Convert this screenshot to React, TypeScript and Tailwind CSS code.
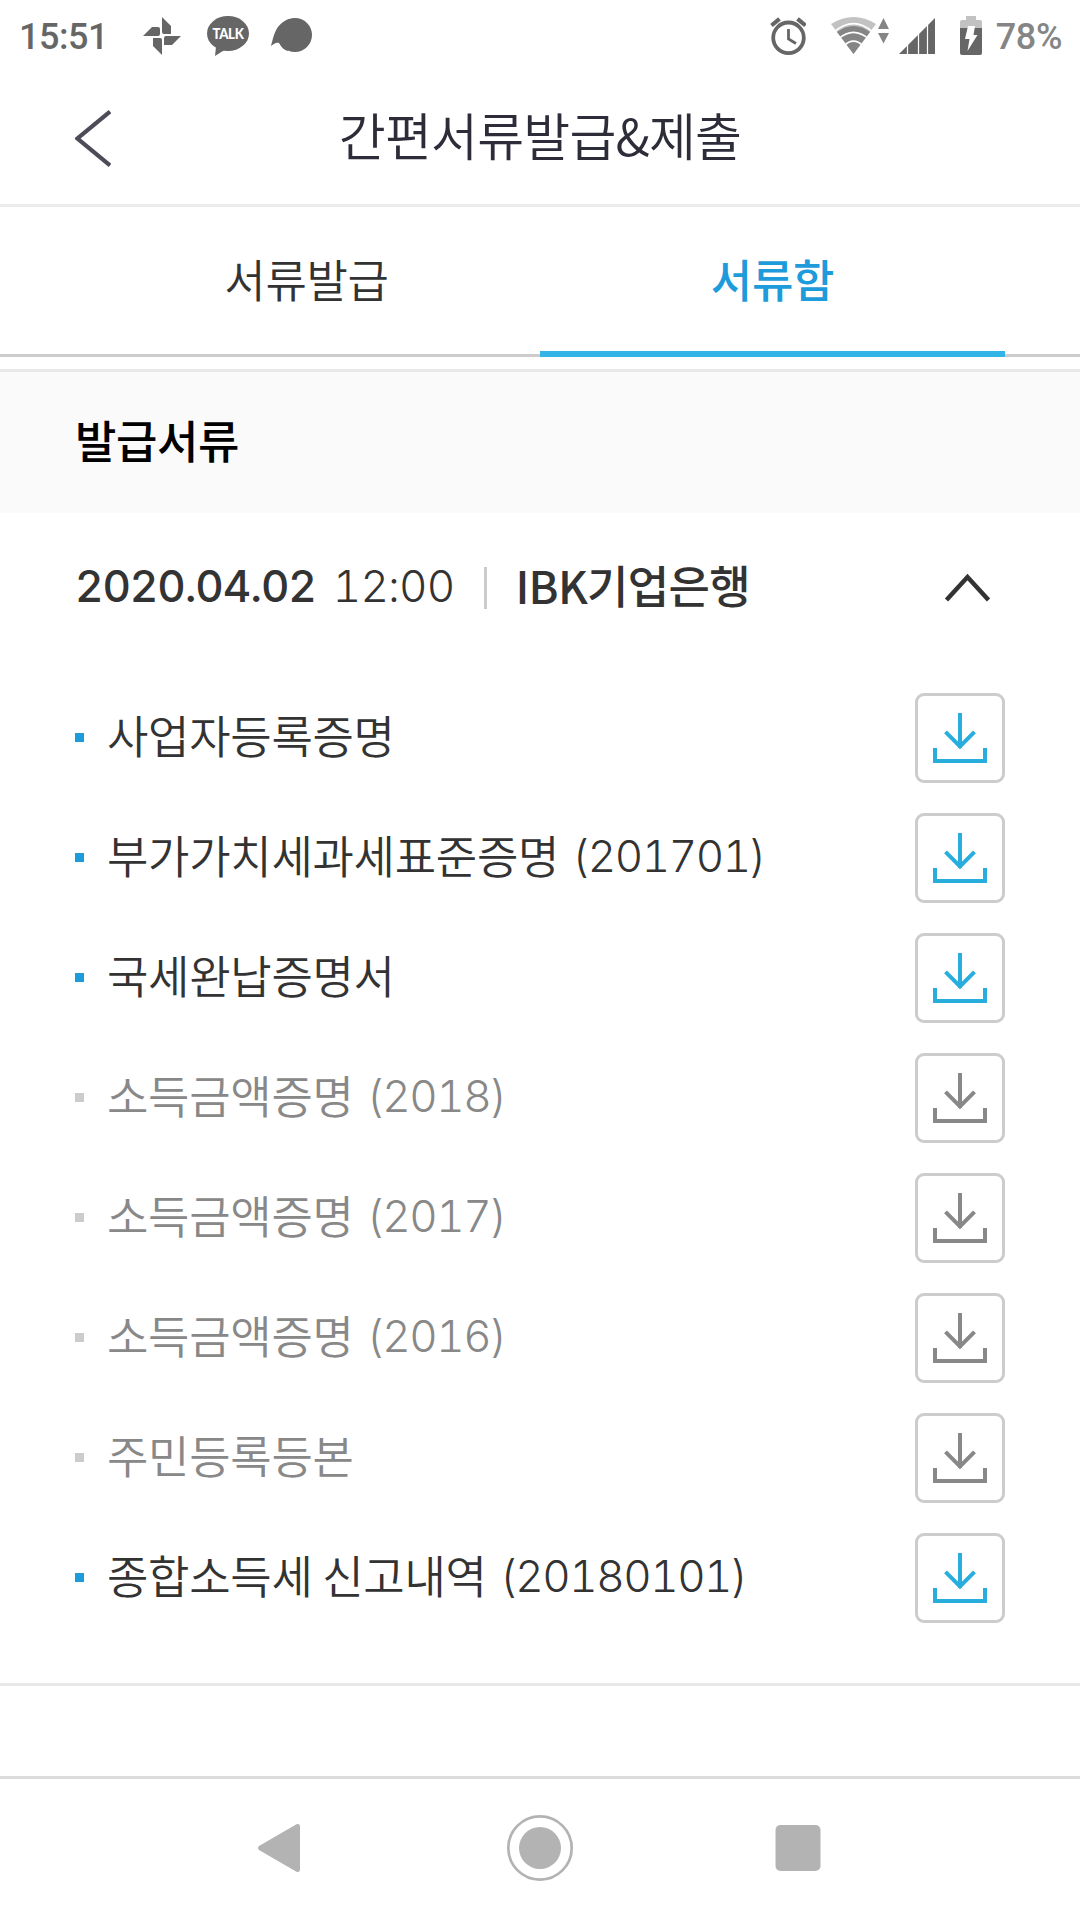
type Doc = { name: string; suffix?: string; ready: boolean };

const docs: Doc[] = [
  { name: "사업자등록증명", ready: true },
  { name: "부가가치세과세표준증명", suffix: "(201701)", ready: true },
  { name: "국세완납증명서", ready: true },
  { name: "소득금액증명", suffix: "(2018)", ready: false },
  { name: "소득금액증명", suffix: "(2017)", ready: false },
  { name: "소득금액증명", suffix: "(2016)", ready: false },
  { name: "주민등록등본", ready: false },
  { name: "종합소득세 신고내역", suffix: "(20180101)", ready: true },
];

const StatusBar = () => (
  <div className="flex h-18 shrink-0 items-start justify-between pr-[18px] pl-[19px] font-[Roboto,sans-serif] text-[36px] leading-[42px] text-[#666]">
    <div className="flex">
      <span className="mt-4 w-[124px] font-medium tracking-[-0.5px]">15:51</span>
      <svg className="mt-4 h-10 w-10" viewBox="143 16 40 40" fill="#666">
        <path d="M162 17L171 26V34H164Q162 34 162 32Z" />
        <path d="M143 36L152 27H158Q160 27 160 29V34Q160 36 158 36Z" />
        <path d="M153 38H160Q162 38 162 40V55L153 46Z" />
        <path d="M164 45V38Q164 36 166 36H181L172 45Z" />
      </svg>
      <div className="relative mt-4 ml-6 h-10 w-[42px]">
        <svg className="h-10 w-[42px]" viewBox="207 16 42 40" fill="#666">
          <ellipse cx="228" cy="33.5" rx="21" ry="17.5" />
          <path d="M216 47L215 56L226 49Z" />
        </svg>
        <span className="absolute inset-x-0 top-[7px] scale-x-88 text-center font-[Lato,sans-serif] text-[15px] leading-5 font-black tracking-[-0.4px] text-white">
          TALK
        </span>
      </div>
      <svg className="mt-4 ml-[22px] h-10 w-[42px]" viewBox="271 16 42 40" fill="#666">
        <circle cx="295" cy="35" r="17" />
        <path d="M271 46C274 36 275 24 289 19L288 51C284 50 281 47 279 43C276 42 274 44 271 46Z" />
      </svg>
    </div>
    <div className="flex">
      <svg className="mt-4 h-10 w-[36px]" viewBox="770 16 36 40" fill="none" stroke="#666">
        <circle cx="788.5" cy="37.8" r="15.3" strokeWidth="3.8" />
        <path d="M788.5 29V39L796 43.5" strokeWidth="2.8" />
        <path d="M771.5 25.5L779.5 18.8M805.5 25.5L797.5 18.8" strokeWidth="4.2" />
      </svg>
      <svg className="mt-4 ml-[24px] h-10 w-[60px]" viewBox="830 16 60 40">
        <path d="M853.5 54L831 24Q853.5 10 876 24Z" fill="#c2c2c2" />
        <path d="M853.5 54L837 32Q853.5 20 870 32Z" fill="#858585" />
        <path
          d="M834 34Q853.5 17 873 34M838 41Q853.5 27.5 869 41M844 47.5Q853.5 38.5 863 47.5"
          transform="translate(0 -1.8)"
          fill="none"
          stroke="#fff"
          strokeWidth="1.6"
        />
        <path d="M883.5 18L889 29H878ZM883.5 43.5L889 33H878Z" fill="#858585" />
      </svg>
      <svg className="mt-4 ml-[8px] h-10 w-[38px]" viewBox="898 16 38 40">
        <path d="M899 54L935 18V54Z" fill="#666" />
        <path d="M907.5 18V54M918.5 18V54M927.5 18V54" stroke="#fff" strokeWidth="1.2" />
      </svg>
      <svg className="mt-4 ml-[24px] h-10 w-[22px]" viewBox="960 16 22 40">
        <path d="M966 16H976V20H980Q982 20 982 22V28H960V22Q960 20 962 20H966Z" fill="#c2c2c2" />
        <path d="M960 28H982V53Q982 55 980 55H962Q960 55 960 53Z" fill="#666" />
        <path d="M968 26H975L973.5 35H977.5L967.5 51L969.5 39H965Z" fill="#fff" />
      </svg>
      <span className="mt-4 ml-[14px] font-medium tracking-[-0.4px] text-[#858585]">78%</span>
    </div>
  </div>
);

const Header = () => (
  <header className="flex h-[135px] shrink-0 items-center border-b-3 border-[#ececec] px-[75px]">
    <svg className="h-[60px] w-9" viewBox="75 108 36 60" fill="none" stroke="#4c4c58" strokeWidth="4.2">
      <path d="M110 111.5L77.5 138.5L110 165.5" />
    </svg>
    <h1 className="mr-9 flex-1 pb-2 text-center text-[51px] leading-[72px] font-[350] tracking-[-0.8px] text-[#2d2d3a]">
      간편서류발급&amp;제출
    </h1>
  </header>
);

const Tabs = () => (
  <nav className="flex h-[150px] shrink-0 border-b-3 border-[#ccc] px-[75px] text-[45px] leading-[64px] tracking-[-0.3px]">
    <button className="w-1/2 pr-[2px] pb-1 font-[350] text-[#333]">서류발급</button>
    <button className="-mb-[3px] w-1/2 border-b-6 border-[#33b4e6] pb-px font-medium text-[#1e9bdb]">
      서류함
    </button>
  </nav>
);

const DownloadButton = ({ ready }: { ready: boolean }) => (
  <button
    className={`flex h-[90px] w-[90px] items-center justify-center rounded-[9px] border-3 border-[#ccc] ${
      ready ? "text-[#28aedd]" : "text-[#888]"
    }`}
  >
    <svg className="h-[84px] w-[84px]" viewBox="3 3 84 84" fill="none" stroke="currentColor" strokeWidth="4">
      <path d="M45 20V55M30.5 38.8L45 53.3L59.5 38.8" />
      <path d="M20 55V68H70V55" />
    </svg>
  </button>
);

const DocRow = ({ doc }: { doc: Doc }) => (
  <li className="flex h-[120px] items-center">
    <span className={`mb-px h-[9px] w-[9px] ${doc.ready ? "bg-[#1e9bdb]" : "bg-[#ccc]"}`} />
    <span
      className={`ml-[23px] flex-1 pb-[6px] text-[45px] leading-[64px] font-[350] tracking-[-0.3px] ${
        doc.ready ? "text-[#333]" : "text-[#888]"
      }`}
    >
      {doc.name}
      {doc.suffix && (
        <span className="ml-[13px] align-[2px] font-[Inter,sans-serif] text-[44px] leading-none font-light tracking-[-1.5px] tabular-nums">
          {doc.suffix}
        </span>
      )}
    </span>
    <DownloadButton ready={doc.ready} />
  </li>
);

const NavigationBar = () => (
  <footer className="flex h-36 shrink-0 justify-center border-t-3 border-[#dcdcdc]">
    <svg className="h-[138px] w-[600px]" viewBox="240 1779 600 138" fill="#b3b3b3">
      <path d="M259 1846L296.5 1824.3Q300 1823 300 1827V1869Q300 1873 296.5 1871.7L259 1850Q257 1848 259 1846Z" />
      <circle cx="540" cy="1848" r="31.7" fill="none" stroke="#b3b3b3" strokeWidth="2.7" />
      <circle cx="540" cy="1848" r="21" />
      <rect x="775.5" y="1825" width="45" height="46" rx="5" />
    </svg>
  </footer>
);

export default function App() {
  return (
    <div className="flex h-[1920px] w-[1080px] flex-col overflow-hidden bg-white font-['Noto_Sans_CJK_KR',sans-serif]">
      <StatusBar />
      <Header />
      <Tabs />
      <h2 className="mt-3 flex h-36 shrink-0 items-center border-t-3 border-[#e8e8e8] bg-[#fafafa] px-[75px] pb-[6px] text-[45px] leading-[64px] font-medium tracking-[-0.4px] text-black">
        발급서류
      </h2>
      <main className="flex-1 px-[75px]">
        <div className="flex h-[150px] items-center text-[45px] leading-[64px] text-[#333]">
          <span className="mb-[5px] font-[Inter,sans-serif] text-[44px] font-medium tracking-[-1.1px] tabular-nums">
            2020.04.02
          </span>
          <span className="mb-[5px] ml-[17px] font-[Inter,sans-serif] text-[44px] font-light tracking-[-0.8px] tabular-nums">
            12:00
          </span>
          <span className="ml-[30px] h-[42px] w-[3px] bg-[#ccc]" />
          <span className="mb-[6px] ml-[28px] flex-1 font-medium tracking-[-0.7px]">IBK기업은행</span>
          <svg className="mr-[13px] h-[30px] w-[48px]" viewBox="944 573 48 30" fill="none" stroke="#333" strokeWidth="4.5">
            <path d="M946.5 600L967.5 577L988.5 600" />
          </svg>
        </div>
        <ul className="pt-[15px]">
          {docs.map((doc, i) => (
            <DocRow key={i} doc={doc} />
          ))}
        </ul>
      </main>
      <div className="h-[93px] shrink-0 border-t-3 border-[#e8e8e8]" />
      <NavigationBar />
    </div>
  );
}
